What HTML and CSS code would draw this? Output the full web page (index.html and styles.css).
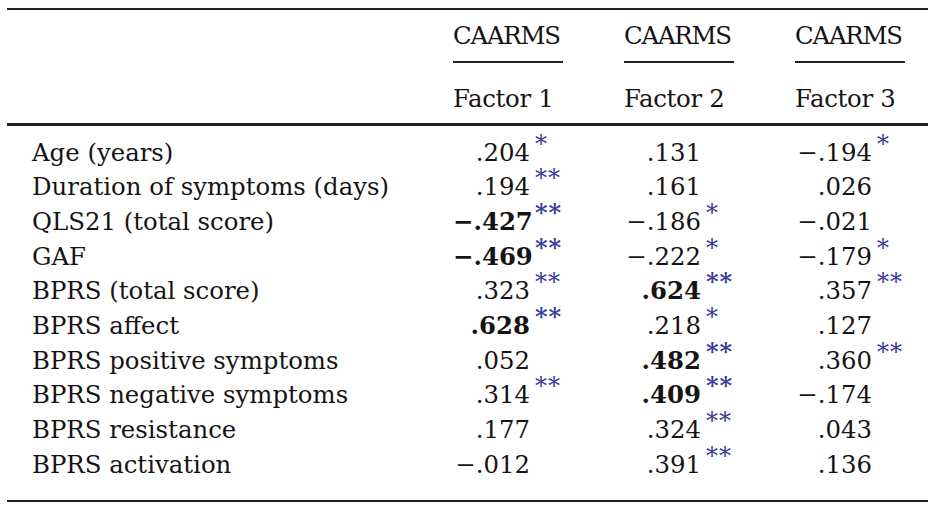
FILE: index.html
```html
<!DOCTYPE html>
<html lang="en">
<head>
<meta charset="utf-8">
<title>CAARMS factors</title>
<link rel="stylesheet" href="styles.css">
</head>
<body>
<table class="tbl">
  <colgroup>
    <col class="c-label">
    <col class="c-f1">
    <col class="c-f2">
    <col class="c-f3">
  </colgroup>
  <thead>
    <tr class="h1">
      <th></th>
      <th><span class="grp">CAARMS</span></th>
      <th><span class="grp">CAARMS</span></th>
      <th><span class="grp">CAARMS</span></th>
    </tr>
    <tr class="h2">
      <th></th>
      <th>Factor 1</th>
      <th>Factor 2</th>
      <th>Factor 3</th>
    </tr>
  </thead>
  <tbody>
    <tr class="first">
      <td class="lbl">Age (years)</td>
      <td><span class="n">.204</span><span class="s">*</span></td>
      <td><span class="n">.131</span></td>
      <td><span class="n">&minus;.194</span><span class="s">*</span></td>
    </tr>
    <tr>
      <td class="lbl">Duration of symptoms (days)</td>
      <td><span class="n">.194</span><span class="s">**</span></td>
      <td><span class="n">.161</span></td>
      <td><span class="n">.026</span></td>
    </tr>
    <tr>
      <td class="lbl">QLS21 (total score)</td>
      <td><span class="n b">&minus;.427</span><span class="s b">**</span></td>
      <td><span class="n">&minus;.186</span><span class="s">*</span></td>
      <td><span class="n">&minus;.021</span></td>
    </tr>
    <tr>
      <td class="lbl">GAF</td>
      <td><span class="n b">&minus;.469</span><span class="s b">**</span></td>
      <td><span class="n">&minus;.222</span><span class="s">*</span></td>
      <td><span class="n">&minus;.179</span><span class="s">*</span></td>
    </tr>
    <tr>
      <td class="lbl">BPRS (total score)</td>
      <td><span class="n">.323</span><span class="s">**</span></td>
      <td><span class="n b">.624</span><span class="s b">**</span></td>
      <td><span class="n">.357</span><span class="s">**</span></td>
    </tr>
    <tr>
      <td class="lbl">BPRS affect</td>
      <td><span class="n b">.628</span><span class="s b">**</span></td>
      <td><span class="n">.218</span><span class="s">*</span></td>
      <td><span class="n">.127</span></td>
    </tr>
    <tr>
      <td class="lbl">BPRS positive symptoms</td>
      <td><span class="n">.052</span></td>
      <td><span class="n b">.482</span><span class="s b">**</span></td>
      <td><span class="n">.360</span><span class="s">**</span></td>
    </tr>
    <tr>
      <td class="lbl">BPRS negative symptoms</td>
      <td><span class="n">.314</span><span class="s">**</span></td>
      <td><span class="n b">.409</span><span class="s b">**</span></td>
      <td><span class="n">&minus;.174</span></td>
    </tr>
    <tr>
      <td class="lbl">BPRS resistance</td>
      <td><span class="n">.177</span></td>
      <td><span class="n">.324</span><span class="s">**</span></td>
      <td><span class="n">.043</span></td>
    </tr>
    <tr class="last">
      <td class="lbl">BPRS activation</td>
      <td><span class="n">&minus;.012</span></td>
      <td><span class="n">.391</span><span class="s">**</span></td>
      <td><span class="n">.136</span></td>
    </tr>
  </tbody>
</table>
</body>
</html>
```
FILE: styles.css
```css
html, body {
  margin: 0;
  padding: 0;
  background: #ffffff;
}

body {
  font-family: "DejaVu Serif", "Liberation Serif", serif;
  font-size: 24.4px;
  color: #161314;
}

.tbl {
  margin: 8px 0 0 7px;
  width: 921px;
  border-collapse: collapse;
  border-spacing: 0;
  table-layout: fixed;
  border-top: 2px solid #231f20;
  border-bottom: 2px solid #231f20;
}

.c-label { width: 446px; }
.c-f1 { width: 171px; }
.c-f2 { width: 171px; }
.c-f3 { width: 133px; }

th, td {
  padding: 0;
  font-weight: normal;
  text-align: left;
  white-space: nowrap;
}

thead th {
  box-sizing: border-box;
}

thead .h1 th {
  height: 53px;
  vertical-align: top;
  line-height: 28px;
  padding-top: 12px;
}

.grp {
  display: block;
  width: 110px;
  border-bottom: 2px solid #231f20;
  padding-bottom: 11px;
  letter-spacing: -1.2px;
}

thead .h2 th {
  height: 61px;
  vertical-align: top;
  line-height: 28px;
  padding-top: 22px;
  border-bottom: 3px solid #231f20;
  letter-spacing: -0.3px;
}

tbody td {
  height: 34.7px;
  line-height: 34.7px;
  vertical-align: top;
}

tbody tr.first td {
  padding-top: 10px;
}

tbody tr.last td {
  padding-bottom: 17px;
}

td.lbl {
  padding-left: 25px;
}

.n {
  display: inline-block;
  width: 77px;
  text-align: right;
}

.b {
  font-weight: bold;
}

.s {
  color: #3a3d9a;
  font-size: 24px;
  line-height: 0;
  margin-left: 5px;
  letter-spacing: 1px;
  vertical-align: 9px;
}
```
